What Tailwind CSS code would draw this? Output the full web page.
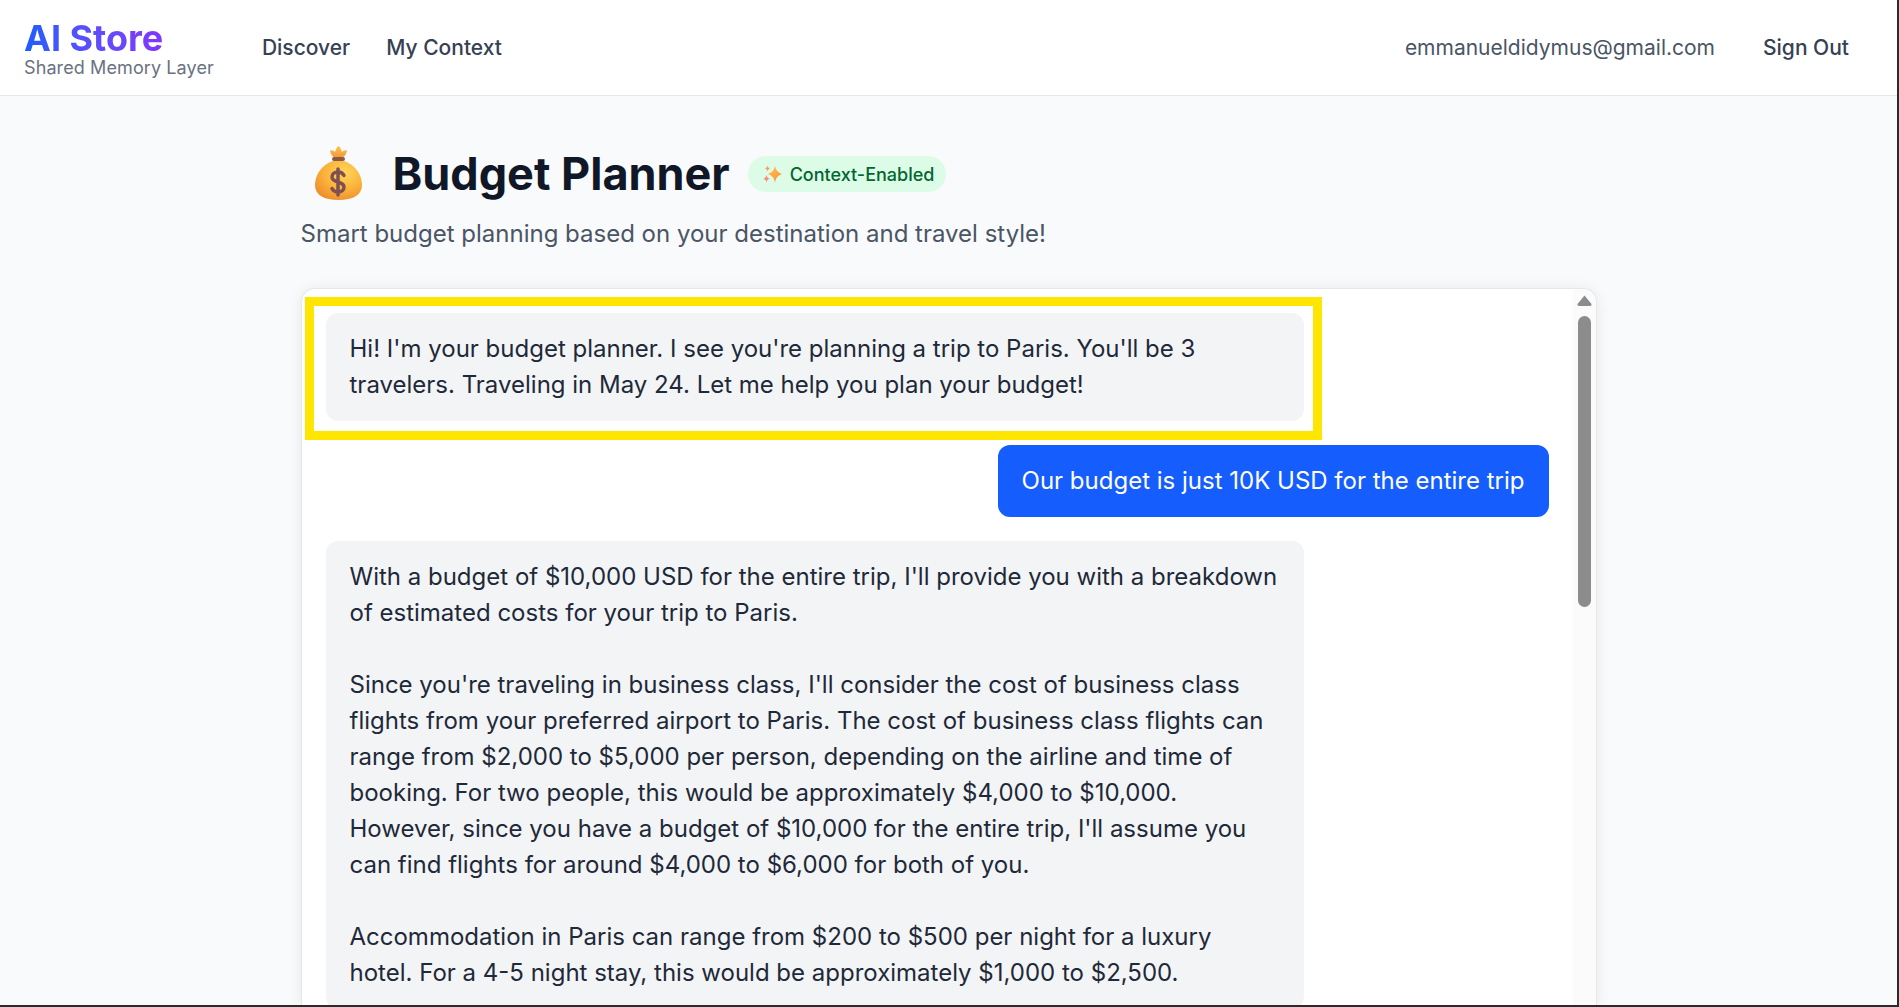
<!DOCTYPE html>
<html lang="en">
<head>
<meta charset="utf-8">
<script src="https://cdn.jsdelivr.net/npm/@tailwindcss/browser@4"></script>
</head>
<body class="bg-[#2b2b2b] overflow-hidden font-['Inter',sans-serif]">
<div class="w-[1897px] h-[1005px] bg-[#f9fafb] overflow-hidden flex flex-col">
  <header class="h-[96px] shrink-0 bg-white border-b border-[#e5e7eb] flex items-center justify-between pl-6 pr-[48px]">
    <div class="flex items-center gap-[48px]">
      <div class="flex flex-col">
        <span class="text-[36px] leading-[40px] font-bold bg-gradient-to-r from-[#155dfc] to-[#9810fa] bg-clip-text text-transparent">AI Store</span>
        <span class="text-[18px] leading-[20px] tracking-[0.1px] text-[#6a7282]">Shared Memory Layer</span>
      </div>
      <nav class="flex items-center gap-[36px] text-[21px] font-medium text-[#364153]">
        <span>Discover</span>
        <span>My Context</span>
      </nav>
    </div>
    <div class="flex items-center gap-[48px] text-[21px]">
      <span class="text-[#4a5565]">emmanueldidymus@gmail.com</span>
      <span class="font-medium text-[#364153]">Sign Out</span>
    </div>
  </header>
  <main class="w-[1296px] mx-auto pt-[36px] flex flex-col flex-1 min-h-0">
    <div class="flex items-center h-[84px]">
      <svg class="w-[60px] h-[60px] ml-[7px] shrink-0" viewBox="0 0 60 60">
        <defs>
          <radialGradient id="bag" cx="0.62" cy="0.3" r="0.85"><stop offset="0" stop-color="#ffd65a"/><stop offset="0.5" stop-color="#fbb23b"/><stop offset="1" stop-color="#e9832a"/></radialGradient>
          <linearGradient id="crown" x1="0" y1="0" x2="0" y2="1"><stop offset="0" stop-color="#ffc451"/><stop offset="1" stop-color="#f3962f"/></linearGradient>
        </defs>
        <path d="M22 6.500c2-.5 4 .5 5 1.500 1-2.500 2-5.500 3.500-6 1.500.5 2.500 3.500 3.500 6 1-1 3-2 5-1.500-.5 3-2 6-5 7.500h-7c-3-1.500-4.500-4.500-5-7.500z" fill="url(#crown)"/>
        <rect x="24" y="13" width="13" height="4" rx="2" fill="#8a5a45"/>
        <path d="M25 17C15 20 7 30 7 41 7 51 16 56 30.500 56 45 56 54 51 54 41 54 30 46 20 36 17z" fill="url(#bag)"/>
        <path d="M36 31.500c-1-2-3-3.500-6-3.500-3.500 0-6 2-6 5 0 6.500 12 3.500 12 10 0 3-2.500 5-6 5-3 0-5-1.500-6-3.500M30 25v26" fill="none" stroke="#7f5050" stroke-width="3.500" stroke-linecap="round"/>
      </svg>
      <h1 class="ml-[25px] text-[45px] leading-[60px] font-bold text-[#101828]">Budget Planner</h1>
      <span class="ml-[18px] h-[36px] px-[12px] rounded-full bg-[#dcfce7] text-[#016630] text-[18px] font-medium flex items-center gap-[6px]">
        <svg class="w-[24px] h-[24px] shrink-0" viewBox="0 0 24 24">
          <defs><linearGradient id="spark" x1="0" y1="0" x2="0.6" y2="1"><stop offset="0" stop-color="#ffc94f"/><stop offset="1" stop-color="#ff9140"/></linearGradient></defs>
          <path d="M15 3.500c1 5 2.500 6.500 7 8.500-4.500 2-6 3.500-7 9-1-5.500-2.500-7-7-9 4.500-2 6-3.500 7-8.500z" fill="url(#spark)"/>
          <path d="M6.500 13c.5 2.400 1.300 3.200 3.300 3.700-2 .5-2.800 1.300-3.300 3.800-.5-2.500-1.300-3.300-3.300-3.800 2-.5 2.800-1.300 3.300-3.700z" fill="#fb8a72"/>
          <path d="M7.500 3.500c.4 1.900 1.100 2.600 2.800 3-1.700.4-2.400 1.100-2.800 3-.4-1.900-1.100-2.600-2.800-3 1.700-.4 2.400-1.100 2.800-3z" fill="#fb9860"/>
        </svg>
        Context-Enabled
      </span>
    </div>
    <p class="text-[24px] leading-[36px] text-[#4a5565]">Smart budget planning based on your destination and travel style!</p>
    <section class="mt-[36px] flex-1 min-h-0 bg-white border border-[#e5e7eb] border-b-0 rounded-t-[14px] shadow-[0_1px_14px_rgba(0,0,0,0.08)] flex overflow-hidden">
      <div class="relative flex-1 min-w-0 pt-[24px] px-[24px] flex flex-col gap-[24px] text-[24px] leading-[36px] text-[#1e2939] overflow-hidden">
        <div class="w-[978px] shrink-0 rounded-[12px] bg-[#f3f4f6] px-[24px] py-[18px]">Hi! I'm your budget planner. I see you're planning a trip to Paris. You'll be 3 travelers. Traveling in May 24. Let me help you plan your budget!</div>
        <div class="absolute left-[3px] top-[8px] w-[1017px] h-[143px] border-[9px] border-[#ffe600]"></div>
        <div class="self-end shrink-0 rounded-[12px] bg-[#155dfc] text-white px-[24px] py-[18px]">Our budget is just 10K USD for the entire trip</div>
        <div class="w-[978px] shrink-0 rounded-[12px] bg-[#f3f4f6] px-[24px] py-[18px]">
          <p>With a budget of $10,000 USD for the entire trip, I'll provide you with a breakdown of estimated costs for your trip to Paris.</p>
          <p class="mt-[36px]">Since you're traveling in business class, I'll consider the cost of business class flights from your preferred airport to Paris. The cost of business class flights can range from $2,000 to $5,000 per person, depending on the airline and time of booking. For two people, this would be approximately $4,000 to $10,000. However, since you have a budget of $10,000 for the entire trip, I'll assume you can find flights for around $4,000 to $6,000 for both of you.</p>
          <p class="mt-[36px]">Accommodation in Paris can range from $200 to $500 per night for a luxury hotel. For a 4-5 night stay, this would be approximately $1,000 to $2,500.</p>
        </div>
      </div>
      <div class="w-[23px] shrink-0 bg-[#fbfbfb] flex flex-col items-center pt-[6px]">
        <svg class="w-[15px] h-[11px] shrink-0" viewBox="0 0 15 11"><path d="M7.500 0.500 14.500 9Q15 11 13 11H2Q0 11 0.500 9z" fill="#8c8c8c"/></svg>
        <div class="mt-[10px] w-[13px] h-[291px] shrink-0 rounded-full bg-[#8c8c8c]"></div>
      </div>
    </section>
  </main>
</div>
</body>
</html>
